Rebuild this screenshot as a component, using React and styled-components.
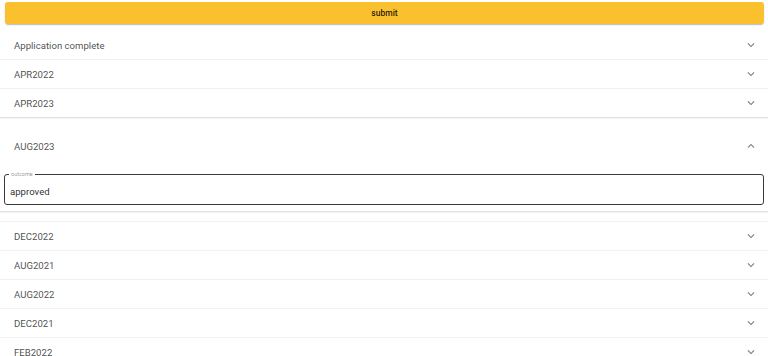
import React, { useState } from 'react'
import styled, { createGlobalStyle } from 'styled-components'

const GlobalStyle = createGlobalStyle`
  body {
    margin: 0;
    background: #fff;
    font-family: Roboto, "Liberation Sans", Arial, sans-serif;
  }
`

const Page = styled.div`
  display: flex;
  flex-direction: column;
  padding-top: 2px;
`

const SubmitButton = styled.button`
  margin: 0 4px 6px 5px;
  height: 22px;
  border: 0;
  border-radius: 3px;
  background: #fbc02d;
  color: rgba(0, 0, 0, 0.87);
  font-family: inherit;
  font-size: 8.5px;
  font-weight: 500;
  box-shadow: 0 2px 1px -1px rgba(0,0,0,0.18), 0 1px 2px rgba(0,0,0,0.12);
  cursor: pointer;
`

const List = styled.div`
  display: flex;
  flex-direction: column;
`

const Item = styled.div`
  background: #fff;
  border-top: 1px solid ${(p) => (p.$first || p.$open ? 'transparent' : 'rgba(0,0,0,0.05)')};
  margin: ${(p) => (p.$open ? '9px 0 10px' : '0')};
  box-shadow: 0 1px 1.5px rgba(0, 0, 0, 0.16);
`

const Summary = styled.div`
  display: flex;
  align-items: center;
  justify-content: space-between;
  height: ${(p) => (p.$open ? '38px' : '28px')};
  padding: 0 10px 0 14px;
  font-size: 9.6px;
  color: rgba(0, 0, 0, 0.72);
  cursor: pointer;
`

const Chevron = styled.svg`
  width: 14px;
  height: 14px;
  fill: rgba(0, 0, 0, 0.5);
  transform: ${(p) => (p.$open ? 'rotate(180deg)' : 'none')};
`

const Details = styled.div`
  padding: 6px 4px 6px 4px;
`

const Field = styled.fieldset`
  margin: 0;
  padding: 9px 0 6px 5px;
  border: 1.4px solid #3a3a3a;
  border-radius: 3px;
`

const Legend = styled.legend`
  padding: 0 2px;
  margin-left: -1px;
  font-size: 5.5px;
  line-height: 6px;
  color: rgba(0, 0, 0, 0.45);
`

const Value = styled.div`
  font-size: 9.6px;
  line-height: 12px;
  color: rgba(0, 0, 0, 0.85);
`

const ExpandIcon = ({ open }) => (
  <Chevron $open={open} viewBox="0 0 24 24">
    <path d="M16.59 8.59 12 13.17 7.41 8.59 6 10l6 6 6-6z" />
  </Chevron>
)

const terms = [
  'Application complete',
  'APR2022',
  'APR2023',
  'AUG2023',
  'DEC2022',
  'AUG2021',
  'AUG2022',
  'DEC2021',
  'FEB2022',
]

const App = () => {
  const [open, setOpen] = useState('AUG2023')

  return (
    <Page>
      <GlobalStyle />
      <SubmitButton>submit</SubmitButton>
      <List>
        {terms.map((t, i) => {
          const isOpen = open === t
          return (
            <Item key={t} $open={isOpen} $first={i === 0}>
              <Summary $open={isOpen} onClick={() => setOpen(isOpen ? null : t)}>
                {t}
                <ExpandIcon open={isOpen} />
              </Summary>
              {isOpen && (
                <Details>
                  <Field>
                    <Legend>outcome</Legend>
                    <Value>approved</Value>
                  </Field>
                </Details>
              )}
            </Item>
          )
        })}
      </List>
    </Page>
  )
}

export default App
